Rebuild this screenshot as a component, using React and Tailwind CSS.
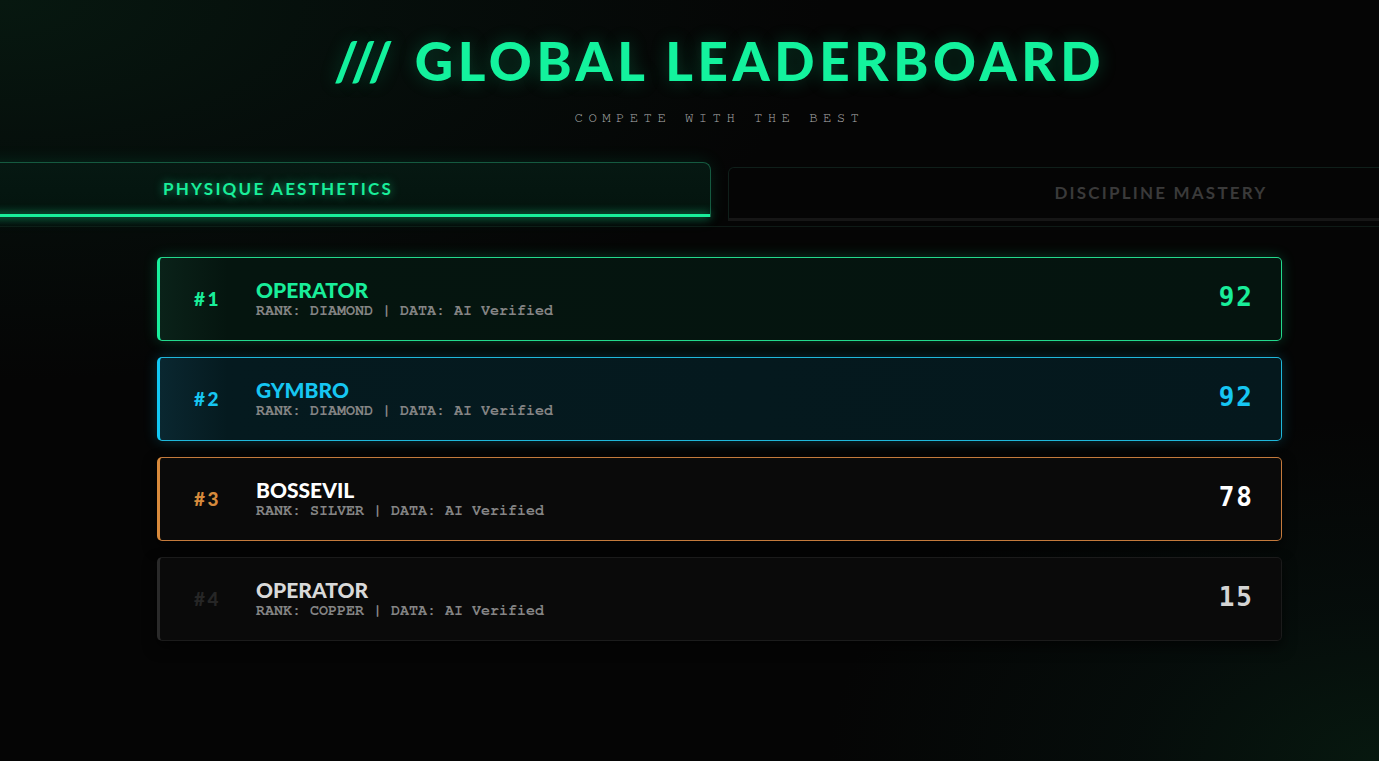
import React from "react";

const rows = [
  {
    rank: "#1",
    name: "OPERATOR",
    detail: "RANK: DIAMOND | DATA: AI Verified",
    score: "92",
    card: "border-[#23d98c] border-l-[#19f09c] bg-[linear-gradient(90deg,#0a2219_0%,#05150f_6%,#05140f_100%)] shadow-[0_0_14px_rgba(20,240,155,0.22)]",
    rankC: "text-[#19ee9a]",
    nameC: "text-[#19ee9a]",
    scoreC: "text-[#19ee9a]",
  },
  {
    rank: "#2",
    name: "GYMBRO",
    detail: "RANK: DIAMOND | DATA: AI Verified",
    score: "92",
    card: "border-[#1fb8dc] border-l-[#12c8f5] bg-[linear-gradient(90deg,#0a2730_0%,#051a1f_6%,#05181d_100%)] shadow-[0_0_14px_rgba(18,200,245,0.22)]",
    rankC: "text-[#16c6f2]",
    nameC: "text-[#16c6f2]",
    scoreC: "text-[#16c6f2]",
  },
  {
    rank: "#3",
    name: "BOSSEVIL",
    detail: "RANK: SILVER | DATA: AI Verified",
    score: "78",
    card: "border-[#c47a3c] border-l-[#d88a3c] bg-[#0a0a0a] shadow-[0_6px_14px_rgba(0,0,0,0.6)]",
    rankC: "text-[#d68a3c]",
    nameC: "text-white",
    scoreC: "text-white",
  },
  {
    rank: "#4",
    name: "OPERATOR",
    detail: "RANK: COPPER | DATA: AI Verified",
    score: "15",
    card: "border-[#1b1b1b] border-l-[#2a2a2a] bg-[#0a0a0a] shadow-[0_6px_14px_rgba(0,0,0,0.6)]",
    rankC: "text-[#262626]",
    nameC: "text-[#d9d9d9]",
    scoreC: "text-[#d4d4d4]",
  },
];

const mono = "font-['Nimbus_Mono_PS','FreeMono','Courier_New','Courier','Liberation_Mono',monospace]";

export default function App() {
  return (
    <div className="w-full min-h-screen h-screen overflow-hidden bg-[#050505] bg-[radial-gradient(ellipse_60%_50%_at_0%_0%,#071810_0%,rgba(6,20,15,0.6)_45%,rgba(5,5,5,0)_100%),radial-gradient(ellipse_40%_45%_at_100%_100%,#07180f_0%,rgba(6,20,16,0.5)_45%,rgba(5,5,5,0)_100%)]">
      <div className="w-[1439px] flex flex-col">
        <div className="pt-[34px] text-center">
          <h1 className="font-['Lato',sans-serif] font-black text-[53px] leading-none tracking-[4.6px] text-[#13f29d] [text-shadow:0_0_18px_rgba(19,242,157,0.25)]">
            /// GLOBAL LEADERBOARD
          </h1>
          <p className={`mt-[24px] ${mono} text-[14px] leading-none tracking-[5.4px] text-[#b0b0b0]`}>
            COMPETE WITH THE BEST
          </p>
        </div>

        <div className="mt-[37px] w-[1749px] ml-[-155px] flex items-start gap-[17px] border-b border-[#0e1a16] pb-[5px]">
          <div className="flex-1 h-[55px] rounded-t-[8px] border border-b-0 border-[#155a40] bg-[linear-gradient(180deg,#061812_0%,#04140e_100%)] flex flex-col shadow-[0_0_18px_rgba(20,240,155,0.12)]">
            <div className="flex-1 flex items-center justify-center">
              <span className="font-['Lato',sans-serif] font-bold text-[17px] tracking-[2.2px] text-[#19ee9a] [text-shadow:0_0_10px_rgba(25,238,154,0.6)]">
                PHYSIQUE AESTHETICS
              </span>
            </div>
            <div className="h-[3px] bg-[#19ee9a] shadow-[0_0_10px_rgba(25,238,154,0.8)]" />
          </div>
          <div className="flex-1 mt-[5px] h-[54px] rounded-t-[6px] border border-[#0f1f1a] border-b-[3px] border-b-[#161616] bg-[#050505] flex items-center justify-center">
            <span className="font-['Lato',sans-serif] font-bold text-[17px] tracking-[2.2px] text-[#3a3a3a]">
              DISCIPLINE MASTERY
            </span>
          </div>
        </div>

        <div className="mt-[30px] w-[1125px] mx-auto flex flex-col gap-[16px]">
          {rows.map((r, i) => (
            <div
              key={i}
              className={`h-[84px] rounded-[5px] border border-l-[3px] flex items-center pl-[34px] pr-[27px] ${r.card}`}
            >
              <div className={`w-[62px] font-['Lato',sans-serif] font-black text-[19px] tracking-[2.5px] ${r.rankC}`}>
                {r.rank}
              </div>
              <div className="flex-1 flex flex-col">
                <div className={`font-['Lato',sans-serif] font-black text-[21px] leading-[22px] ${r.nameC}`}>
                  {r.name}
                </div>
                <div className={`${mono} font-bold text-[15px] leading-[19px] text-[#858585]`}>
                  {r.detail}
                </div>
              </div>
              <div className={`font-['DejaVu_Sans_Mono',monospace] font-bold text-[26px] leading-none mb-[4px] tracking-[2px] ${r.scoreC}`}>
                {r.score}
              </div>
            </div>
          ))}
        </div>
      </div>
    </div>
  );
}
